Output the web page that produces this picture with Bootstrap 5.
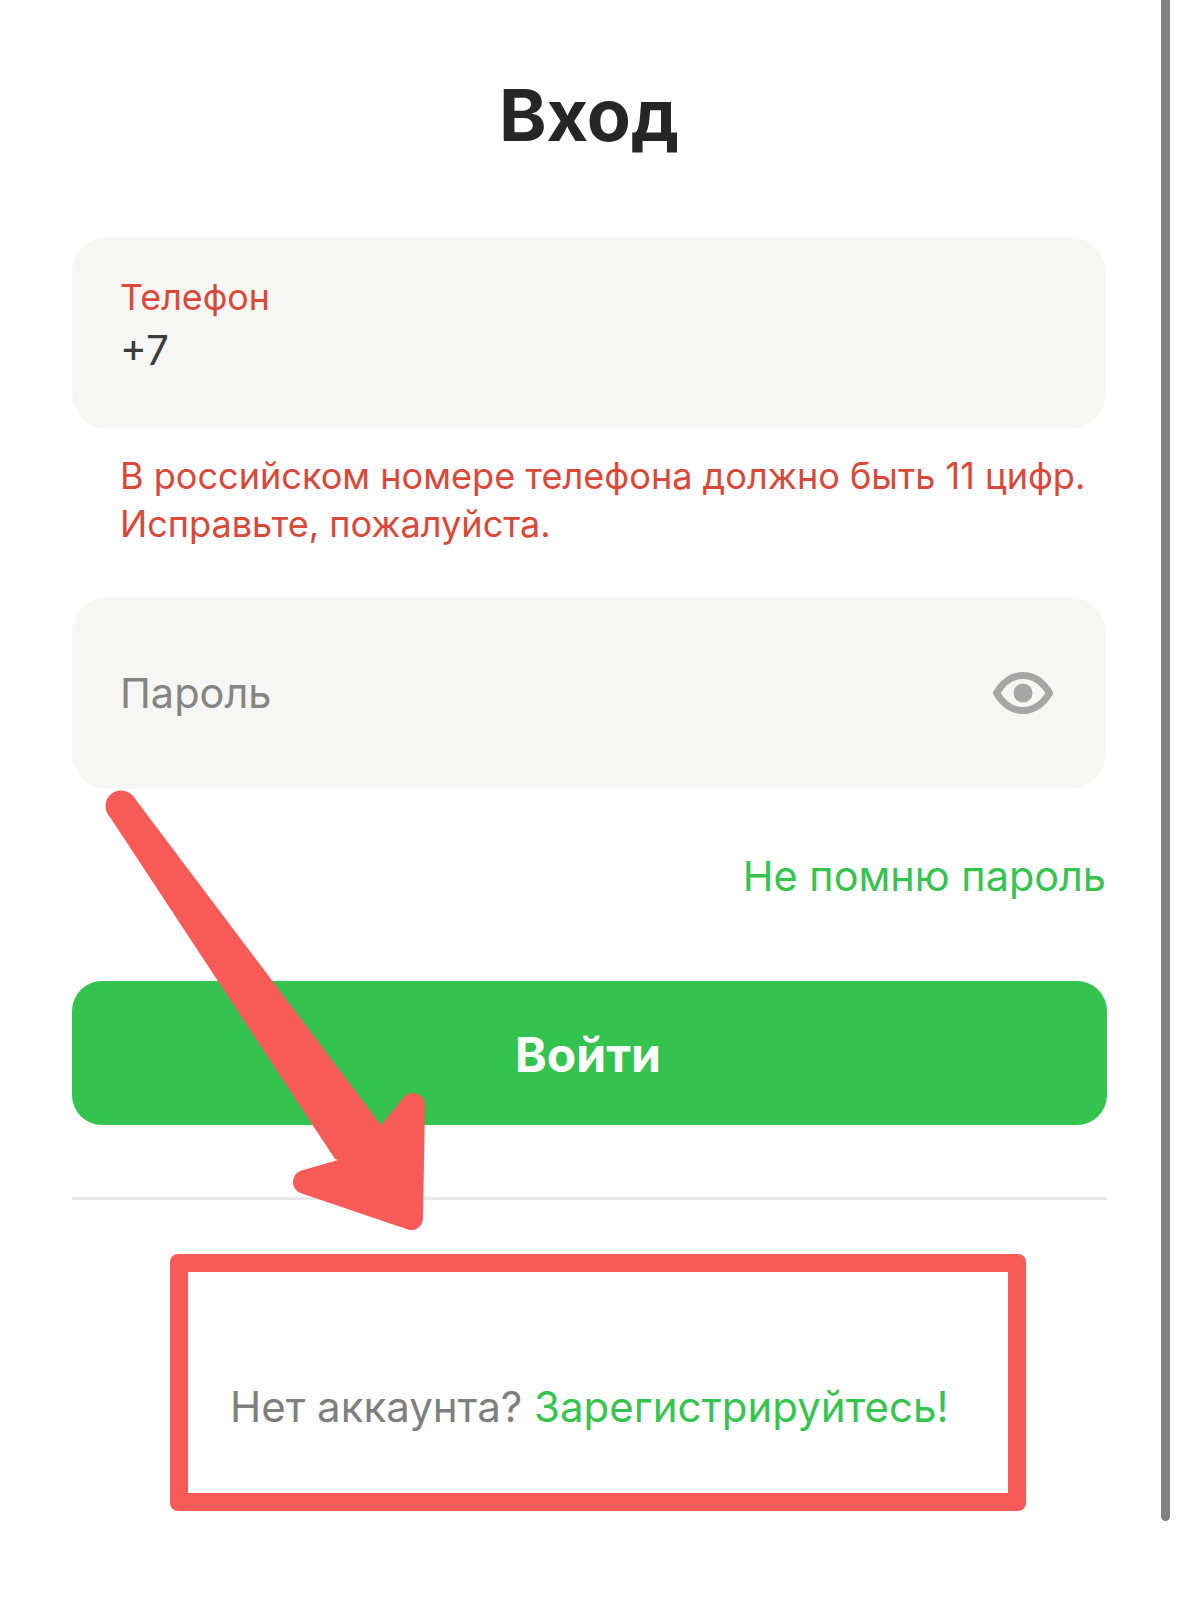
<!DOCTYPE html>
<html lang="ru">
<head>
    <meta charset="UTF-8">
    <meta name="viewport" content="width=device-width, initial-scale=1.0">
    <title>Вход</title>
    <link href="https://cdn.jsdelivr.net/npm/bootstrap@5.3.0/dist/css/bootstrap.min.css" rel="stylesheet">
    <style>
        html, body { height: 100%; overflow: hidden; }
        body { font-family: Inter, "Liberation Sans", sans-serif; background: #fff; position: relative; }
        .login-wrap { width: 1034px; margin-left: 72px; }
        .login-title { font-size: 72px; font-weight: 700; line-height: 88px; color: #262626; text-align: center; margin: 71px 0 78px 0; }
        .login-field { height: 192px; background: #f6f6f4; border-radius: 36px; padding: 0 48px; }
        .phone-field { padding-bottom: 15px; }
        .pass-field { padding-right: 53px; }
        .field-label { font-size: 35.800px; line-height: 44px; color: #d9493a; }
        .field-value { font-size: 40.500px; line-height: 52px; color: #3c3c3c; margin-top: 6px; }
        .field-hint { font-size: 36.100px; line-height: 48px; color: #d9493a; margin: 23px 0 49px 48px; white-space: nowrap; }
        .field-placeholder { font-size: 41.500px; color: #858585; }
        .forgot-link { font-size: 41.400px; line-height: 52px; color: #36c44f; text-decoration: none; text-align: right; display: block; margin: 61px 0 79px 0; }
        .login-btn { height: 144px; width: 1035px; background: #35c350; color: #fff; font-size: 48px; font-weight: 700; border: 0; border-radius: 30px; padding: 3px 3px 0 0; }
        .login-divider { height: 3px; width: 1035px; background: #e8e8e8; margin-top: 72px; }
        .signup-line { font-size: 42px; line-height: 52px; color: #7f7f7f; margin: 181px 0 0 158px; white-space: nowrap; }
        .signup-line a { color: #36c44f; text-decoration: none; }
        .fake-scroll { position: absolute; left: 1161px; top: 0; width: 9px; height: 1521px; background: #808080; border-radius: 0 0 5px 5px; }
        .red-frame { position: absolute; left: 170px; top: 1254px; width: 856px; height: 257px; border: 18px solid #f75b58; border-radius: 8px; }
        .red-arrow { position: absolute; left: 0; top: 0; }
    </style>
</head>
<body>
    <div class="login-wrap">
        <h1 class="login-title">Вход</h1>

        <div class="login-field phone-field d-flex flex-column justify-content-center">
            <div class="field-label">Телефон</div>
            <div class="field-value">+7</div>
        </div>
        <div class="field-hint">В российском номере телефона должно быть 11 цифр.<br>Исправьте, пожалуйста.</div>

        <div class="login-field pass-field d-flex align-items-center justify-content-between">
            <span class="field-placeholder">Пароль</span>
            <svg width="60" height="42" viewBox="0 0 60 42" fill="none">
                <path d="M3.500 21C11 8.500 20 3.500 30 3.500S49 8.500 56.500 21C49 33.500 40 38.500 30 38.500S11 33.500 3.500 21Z" stroke="#a6a6a6" stroke-width="7" stroke-linejoin="round"/>
                <circle cx="30" cy="21" r="9.500" fill="#a6a6a6"/>
            </svg>
        </div>

        <a href="#" class="forgot-link">Не помню пароль</a>

        <button type="button" class="btn login-btn">Войти</button>
        <div class="login-divider"></div>

        <div class="signup-line">Нет аккаунта? <a href="#">Зарегистрируйтесь!</a></div>
    </div>

    <div class="fake-scroll"></div>
    <div class="red-frame"></div>
    <svg class="red-arrow" width="1179" height="1615" viewBox="0 0 1179 1615">
        <circle cx="121" cy="806" r="15.500" fill="#f75b58"/>
        <path d="M133 796L381 1125L400 1180L335 1159L108 814Z" fill="#f75b58"/>
        <path d="M413 1105L411 1218L305 1182L343 1171L390 1133Z" fill="#f75b58" stroke="#f75b58" stroke-width="24" stroke-linejoin="round"/>
    </svg>
</body>
</html>
